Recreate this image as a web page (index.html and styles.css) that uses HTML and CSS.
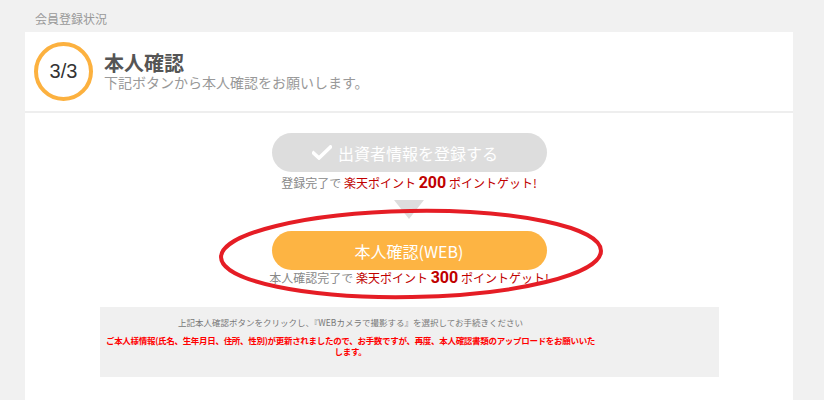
FILE: index.html
```html
<!DOCTYPE html>
<html lang="ja">
<head>
    <meta charset="UTF-8">
    <title>会員登録状況</title>
    <link rel="stylesheet" href="styles.css">
</head>
<body>
    <div class="section-label">会員登録状況</div>
    <div class="card">
        <div class="step-header">
            <div class="step-circle">3/3</div>
            <div class="step-text">
                <h2>本人確認</h2>
                <p>下記ボタンから本人確認をお願いします。</p>
            </div>
        </div>

        <div class="step-body">
            <div class="btn btn-done">
                <svg class="check" width="20" height="15" viewBox="0 0 20 15">
                    <path d="M1.5 8 L7 13 L18.5 2" fill="none" stroke="#fff" stroke-width="3.6" stroke-linecap="square"/>
                </svg>
                出資者情報を登録する
            </div>
            <p class="points">登録完了で <span class="red">楽天ポイント <b>200</b> ポイントゲット!</span></p>

            <div class="arrow"></div>

            <div class="btn btn-main">本人確認(WEB)</div>
            <p class="points points-main">本人確認完了で <span class="red">楽天ポイント <b>300</b> ポイントゲット!</span></p>

            <div class="notice">
                <div class="notice-inner">
                    <p class="notice-info">上記本人確認ボタンをクリックし、『WEBカメラで撮影する』を選択してお手続きください</p>
                    <p class="notice-alert">ご本人様情報(氏名、生年月日、住所、性別)が更新されましたので、お手数ですが、再度、本人確認書類のアップロードをお願いいたします。</p>
                </div>
            </div>

            <!-- hand drawn highlight -->
            <svg class="highlight" width="824" height="400" viewBox="0 0 824 400">
                <ellipse cx="411" cy="254" rx="190" ry="43" fill="none" stroke="#e51d25" stroke-width="4" transform="rotate(-1 411 254)"/>
            </svg>
        </div>
    </div>
</body>
</html>
```

FILE: styles.css
```css
body {
    margin: 0;
    background-color: #f1f1f1;
    font-family: "Noto Sans CJK JP", "Liberation Sans", sans-serif;
    color: #333;
    height: 400px;
    overflow: hidden;
}
.section-label {
    padding: 10px 0 0 35px;
    font-size: 12px;
    line-height: 18px;
    color: #999;
    margin-bottom: 4px;
}
.card {
    margin: 0 31px 0 25px;
    background-color: #ffffff;
    height: 368px;
}
/* Step header */
.step-header {
    display: flex;
    align-items: center;
    height: 79px;
    padding-left: 9px;
    border-bottom: 2px solid #eeeeee;
}
.step-circle {
    width: 51px;
    height: 51px;
    border: 4.5px solid #fcb13f;
    border-radius: 50%;
    display: flex;
    align-items: center;
    justify-content: center;
    font-family: "Liberation Sans", Arial, sans-serif;
    font-size: 20px;
    color: #333;
    margin-right: 11px;
}
.step-text h2 {
    margin: 0;
    font-size: 20px;
    line-height: 22px;
    color: #555;
    font-weight: bold;
}
.step-text p {
    margin: 0;
    font-size: 14px;
    line-height: 17px;
    color: #999;
}
/* Step body */
.step-body {
    position: relative;
    padding-top: 20px;
}
.btn {
    width: 275px;
    height: 39px;
    margin: 0 auto;
    border-radius: 20px;
    display: flex;
    align-items: center;
    justify-content: center;
    color: #ffffff;
    font-size: 16px;
}
.btn-done {
    background-color: #dddddd;
}
.btn-done .check {
    margin-right: 6px;
    margin-left: -8px;
}
.btn-main {
    background-color: #fdb443;
    margin-top: 12px;
}
.points {
    margin: 1px 0 0;
    text-align: center;
    font-size: 12px;
    line-height: 20px;
    color: #888;
}
.points .red {
    color: #c00000;
}
.points b {
    font-family: Roboto, "Liberation Sans", sans-serif;
    font-size: 16px;
    font-weight: bold;
}
.points-main {
    margin-top: -2px;
}
.arrow {
    width: 0;
    height: 0;
    margin: 7px auto 0;
    border-left: 15px solid transparent;
    border-right: 15px solid transparent;
    border-top: 19px solid #dddddd;
}
/* Notice box */
.notice {
    width: 619px;
    height: 70px;
    margin: 19px auto 0;
    background-color: #f0f0f0;
    box-sizing: border-box;
    padding: 9px 0 0 4px;
}
.notice-inner {
    width: 494px;
    text-align: center;
}
.notice-info {
    margin: 0;
    font-size: 8.5px;
    line-height: 12px;
    color: #777;
}
.notice-alert {
    margin: 7px 0 0;
    font-size: 8.5px;
    line-height: 11px;
    font-weight: bold;
    letter-spacing: -0.3px;
    color: #ff0000;
}
.highlight {
    position: absolute;
    left: -25px;
    top: -113px;
    pointer-events: none;
}
```
